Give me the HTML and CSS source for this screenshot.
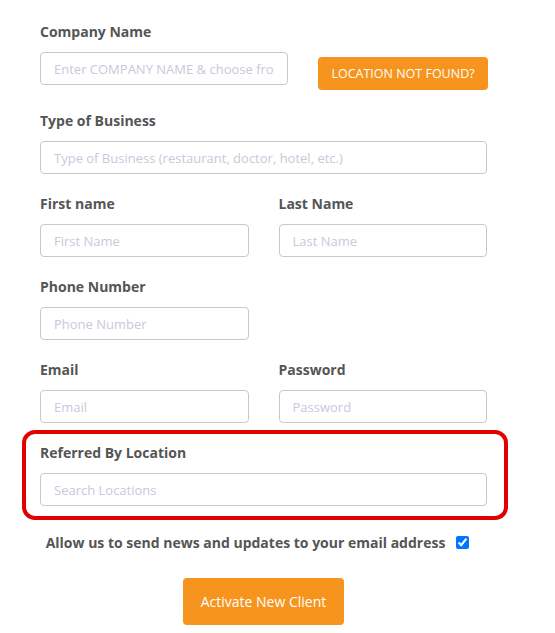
FILE: index.html
```html
<!DOCTYPE html>
<html>
<head>
<meta charset="utf-8">
<link rel="stylesheet" href="styles.css">
</head>
<body>
<form class="form">
  <div class="row">
    <div class="group col-7">
      <label class="label">Company Name</label>
      <input class="input" type="text" placeholder="Enter COMPANY NAME &amp; choose from the list">
    </div>
    <div class="col-5">
      <button type="button" class="btn-small">LOCATION NOT FOUND?</button>
    </div>
  </div>
  <div class="group">
    <label class="label">Type of Business</label>
    <input class="input" type="text" placeholder="Type of Business (restaurant, doctor, hotel, etc.)">
  </div>
  <div class="row">
    <div class="group half">
      <label class="label">First name</label>
      <input class="input" type="text" placeholder="First Name">
    </div>
    <div class="group half">
      <label class="label">Last Name</label>
      <input class="input" type="text" placeholder="Last Name">
    </div>
  </div>
  <div class="row">
    <div class="group half">
      <label class="label">Phone Number</label>
      <input class="input" type="text" placeholder="Phone Number">
    </div>
    <div class="half"></div>
  </div>
  <div class="row">
    <div class="group half">
      <label class="label">Email</label>
      <input class="input" type="text" placeholder="Email">
    </div>
    <div class="group half">
      <label class="label">Password</label>
      <input class="input" type="password" placeholder="Password">
    </div>
  </div>
  <div class="highlight">
    <label class="label">Referred By Location</label>
    <input class="input" type="text" placeholder="Search Locations">
  </div>
  <div class="check-row">
    <label class="check-label" for="news">Allow us to send news and updates to your email address</label>
    <input class="check" id="news" type="checkbox" checked>
  </div>
  <div class="submit-row">
    <button type="button" class="btn-main">Activate New Client</button>
  </div>
</form>
</body>
</html>
```

FILE: styles.css
```css
html, body {
  margin: 0;
  padding: 0;
  background: #ffffff;
}
body {
  font-family: "Open Sans", "Liberation Sans", sans-serif;
  color: #555555;
}
.form {
  width: 447px;
  margin-left: 40px;
  padding-top: 21px;
}
.row {
  display: flex;
  gap: 30px;
  align-items: flex-start;
}
.col-7 {
  width: 248px;
  flex: none;
}
.col-5 {
  flex: 1;
}
.half {
  flex: 1;
  min-width: 0;
}
.group {
  margin-bottom: 19px;
}
.label {
  display: block;
  font-size: 14px;
  font-weight: 700;
  line-height: 20px;
  padding-top: 1px;
  margin-bottom: 10px;
  color: #555555;
}
.input {
  display: block;
  box-sizing: border-box;
  width: 100%;
  height: 33px;
  padding: 0 13px;
  border: 1px solid #cbc6cb;
  border-radius: 4px;
  font-family: "Open Sans", "Liberation Sans", sans-serif;
  font-size: 13px;
  color: #555555;
  background: #ffffff;
  outline: none;
}
.input::placeholder {
  color: #c8c9da;
}
.btn-small {
  display: block;
  margin-top: 36px;
  margin-bottom: 20px;
  width: 170px;
  height: 33px;
  padding: 0;
  border: none;
  border-radius: 4px;
  background: #f7941e;
  color: #ffffff;
  font-family: "Open Sans", "Liberation Sans", sans-serif;
  font-size: 12.5px;
  font-weight: 400;
}
.highlight {
  margin: -12px -21px 0 -18px;
  padding: 8px 17px 10px 14px;
  border: 4px solid #e30000;
  border-radius: 13px;
}
.check-row {
  display: flex;
  justify-content: center;
  align-items: center;
  margin-top: 12px;
  height: 21px;
}
.check-label {
  font-size: 14px;
  font-weight: 700;
  line-height: 21px;
  color: #555555;
}
.check {
  width: 13px;
  height: 13px;
  margin: 0 12px 0 11px;
  accent-color: #0075ff;
}
.submit-row {
  display: flex;
  justify-content: center;
  margin-top: 25px;
}
.btn-main {
  width: 161px;
  height: 47px;
  padding: 0;
  border: none;
  border-radius: 4px;
  background: #f7941e;
  color: #ffffff;
  font-family: "Open Sans", "Liberation Sans", sans-serif;
  font-size: 14px;
  font-weight: 400;
}
```
